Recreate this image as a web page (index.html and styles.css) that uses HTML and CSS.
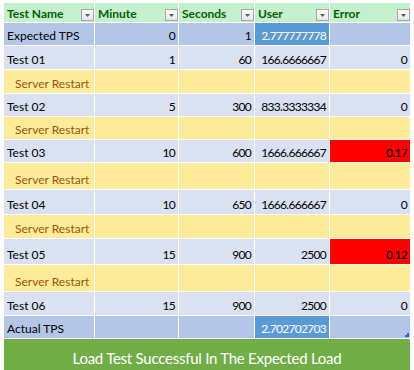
FILE: index.html
```html
<!DOCTYPE html>
<html lang="en">
<head>
    <meta charset="UTF-8">
    <meta name="viewport" content="width=device-width, initial-scale=1.0">
    <title>Load Test Results</title>
    <link rel="stylesheet" href="styles.css">
</head>
<body>

    <div class="sheet">
        <table class="results">
            <colgroup>
                <col class="col-name">
                <col class="col-minute">
                <col class="col-seconds">
                <col class="col-user">
                <col class="col-error">
            </colgroup>
            <thead>
                <tr class="head">
                    <th><div class="head-cell"><span>Test Name</span><span class="filter"><svg width="5" height="3" viewBox="0 0 5 3"><path d="M0 0h5L2.5 3z" fill="#595959"/></svg></span></div></th>
                    <th><div class="head-cell"><span>Minute</span><span class="filter"><svg width="5" height="3" viewBox="0 0 5 3"><path d="M0 0h5L2.5 3z" fill="#595959"/></svg></span></div></th>
                    <th><div class="head-cell"><span>Seconds</span><span class="filter"><svg width="5" height="3" viewBox="0 0 5 3"><path d="M0 0h5L2.5 3z" fill="#595959"/></svg></span></div></th>
                    <th><div class="head-cell"><span>User</span><span class="filter"><svg width="5" height="3" viewBox="0 0 5 3"><path d="M0 0h5L2.5 3z" fill="#595959"/></svg></span></div></th>
                    <th><div class="head-cell"><span>Error</span><span class="filter"><svg width="5" height="3" viewBox="0 0 5 3"><path d="M0 0h5L2.5 3z" fill="#595959"/></svg></span></div></th>
                </tr>
            </thead>
            <tbody>
                <tr class="tps h23">
                    <td>Expected TPS</td>
                    <td class="num">0</td>
                    <td class="num">1</td>
                    <td class="num selected">2.777777778</td>
                    <td></td>
                </tr>
                <tr class="band h24">
                    <td>Test 01</td>
                    <td class="num">1</td>
                    <td class="num">60</td>
                    <td class="num">166.6666667</td>
                    <td class="num">0</td>
                </tr>
                <tr class="restart h24">
                    <td class="note">Server Restart</td>
                    <td></td><td></td><td></td><td></td>
                </tr>
                <tr class="band h23">
                    <td>Test 02</td>
                    <td class="num">5</td>
                    <td class="num">300</td>
                    <td class="num">833.3333334</td>
                    <td class="num">0</td>
                </tr>
                <tr class="restart h23">
                    <td class="note">Server Restart</td>
                    <td></td><td></td><td></td><td></td>
                </tr>
                <tr class="band h23">
                    <td>Test 03</td>
                    <td class="num">10</td>
                    <td class="num">600</td>
                    <td class="num">1666.666667</td>
                    <td class="num failed">0.17</td>
                </tr>
                <tr class="restart h27">
                    <td class="note">Server Restart</td>
                    <td></td><td></td><td></td><td></td>
                </tr>
                <tr class="band h25">
                    <td>Test 04</td>
                    <td class="num">10</td>
                    <td class="num">650</td>
                    <td class="num">1666.666667</td>
                    <td class="num">0</td>
                </tr>
                <tr class="restart h24">
                    <td class="note">Server Restart</td>
                    <td></td><td></td><td></td><td></td>
                </tr>
                <tr class="band h26">
                    <td>Test 05</td>
                    <td class="num">15</td>
                    <td class="num">900</td>
                    <td class="num">2500</td>
                    <td class="num failed">0.12</td>
                </tr>
                <tr class="restart h27">
                    <td class="note">Server Restart</td>
                    <td></td><td></td><td></td><td></td>
                </tr>
                <tr class="band h24">
                    <td>Test 06</td>
                    <td class="num">15</td>
                    <td class="num">900</td>
                    <td class="num">2500</td>
                    <td class="num">0</td>
                </tr>
                <tr class="tps h23">
                    <td>Actual TPS</td>
                    <td></td>
                    <td></td>
                    <td class="num selected">2.702702703</td>
                    <td class="corner"><span class="resize"><svg width="4" height="4" viewBox="0 0 4 4"><path d="M2 0h2v4H0V2h2z" fill="#3a5fcd"/></svg></span></td>
                </tr>
                <tr class="summary">
                    <td colspan="5">Load Test Successful In The Expected Load</td>
                </tr>
                <tr class="blank">
                    <td></td><td></td><td></td><td></td><td></td>
                </tr>
            </tbody>
        </table>
    </div>

</body>
</html>
```

FILE: styles.css
```css
body {
    margin: 0;
    background-color: #fff;
    font-family: Lato, "Liberation Sans", sans-serif;
    font-size: 12px;
    color: #000;
}

.sheet {
    padding: 3px 3px 0 4px;
}

.results {
    border-collapse: separate;
    border-spacing: 0;
    table-layout: fixed;
    width: 407px;
}

.col-name { width: 91px; }
.col-minute { width: 84px; }
.col-seconds { width: 76px; }
.col-user { width: 75px; }
.col-error { width: 81px; }

.results th,
.results td {
    padding: 0 4px 2px 3px;
    vertical-align: bottom;
    border-right: 1px solid #fff;
    border-bottom: 1px solid #fff;
    white-space: nowrap;
    overflow: hidden;
    line-height: 14px;
    text-align: left;
}

/* header row with filter buttons */
.head th {
    height: 18px;
    padding: 0 0 1px 3px;
    background-color: #c6efce;
    color: #006100;
    font-weight: bold;
}

.head-cell {
    display: flex;
    justify-content: space-between;
    align-items: flex-end;
}

.filter {
    display: flex;
    align-items: center;
    justify-content: center;
    width: 11px;
    height: 10px;
    border: 1px solid #a6a6a6;
    background: linear-gradient(#ffffff, #e6e6e6);
}

.filter svg {
    margin-top: 1px;
}

/* row heights */
.h23 { height: 23px; }
.h24 { height: 24px; }
.h25 { height: 25px; }
.h26 { height: 26px; }
.h27 { height: 27px; }

/* row colours */
.tps td {
    background-color: #b4c6e7;
}

.band td {
    background-color: #d9e1f2;
}

.restart td {
    background-color: #ffeb9c;
    color: #9c5700;
}

.results td.note {
    padding-left: 11px;
}

.results td.num {
    padding-left: 2px;
    padding-right: 3px;
    text-align: right;
    letter-spacing: -0.7px;
}

.results td.selected {
    background-color: #5b9bd5;
    color: #fff;
}

.results td.failed {
    background-color: #ff0000;
}

.corner {
    position: relative;
}

.resize {
    position: absolute;
    right: 1px;
    bottom: 1px;
    line-height: 0;
}

.summary td {
    height: 28px;
    padding: 0 0 3px 0;
    background-color: #70ad47;
    color: #fff;
    font-size: 15px;
    letter-spacing: -0.25px;
    line-height: 18px;
    text-align: center;
}

.blank td {
    height: 5px;
    padding: 0;
    border-bottom: none;
    border-top: 1px solid #dadada;
    border-right: 1px solid #dadada;
}
```
